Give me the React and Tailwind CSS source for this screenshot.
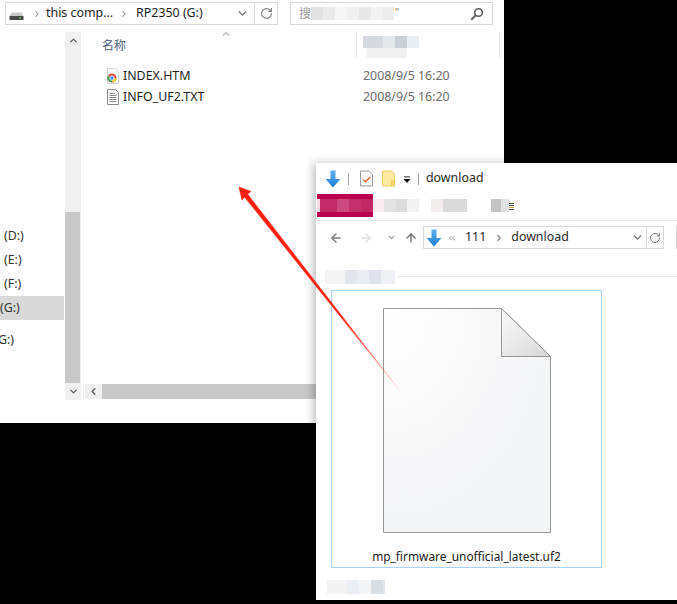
import { ArrowLeft, ArrowRight, ArrowUp, ChevronDown, ChevronUp, ChevronLeft, ChevronRight, ChevronsLeft, RotateCw } from 'lucide-react'

const uiFont = "font-['Noto_Sans','Noto_Sans_CJK_SC',sans-serif]"

// pixelated patches that hide text in the screenshot
function Mosaic({ cells, className = '' }) {
  return (
    <div className={`flex blur-[0.6px] ${className}`}>
      {cells.map((c, i) => (
        <div key={i} className={c} />
      ))}
    </div>
  )
}

function BlueArrow() {
  return (
    <svg width="16" height="18" viewBox="0 0 16 18" className="shrink-0">
      <defs>
        <linearGradient id="blue" x1="0" y1="0" x2="0" y2="1">
          <stop offset="0" stopColor="#5fb0ee" />
          <stop offset="1" stopColor="#1f7fd6" />
        </linearGradient>
      </defs>
      <path d="M5.5 0.5h5V9H15.5L8 17.5 0.5 9H5.5z" fill="url(#blue)" />
    </svg>
  )
}

function DriveIcon() {
  return (
    <svg width="15" height="8" viewBox="0 0 15 8">
      <path d="M2.5 0.5h10L14.5 4H0.5z" fill="#c9c9c9" />
      <rect x="0.5" y="4" width="14" height="4" fill="#4a4a4a" />
      <rect x="10" y="5.5" width="2" height="1" fill="#6fdc6f" />
    </svg>
  )
}

function ChromeDocIcon() {
  return (
    <svg width="16" height="16" viewBox="0 0 16 16" className="shrink-0">
      <path d="M2.5 0.5h8l3 3v12h-11z" fill="#fff" stroke="#d4d4d4" />
      <circle cx="7" cy="10" r="4.5" fill="#e8453c" />
      <path d="M7 10 L3 12.2 A4.5 4.5 0 0 1 3 7.8 L7 10z" fill="#3aa757" />
      <path d="M7 10 L3 12 A4.5 4.5 0 0 0 7 14.5 A4.5 4.5 0 0 0 11.5 10z" fill="#3aa757" />
      <path d="M7 10 L11.5 10 A4.5 4.5 0 0 1 7 14.5z" fill="#fbc02d" />
      <circle cx="7" cy="10" r="2.2" fill="#4a8af4" stroke="#fff" strokeWidth="0.8" />
    </svg>
  )
}

function TextDocIcon() {
  return (
    <svg width="16" height="16" viewBox="0 0 16 16" className="shrink-0">
      <path d="M2.5 0.5h8l3 3v12h-11z" fill="#fff" stroke="#8a8a8a" />
      <path d="M4.5 4.5h5M4.5 6.5h7M4.5 8.5h7M4.5 10.5h7M4.5 12.5h7" stroke="#8a8a8a" />
    </svg>
  )
}

function SearchIcon() {
  return (
    <svg width="14" height="14" viewBox="0 0 14 14" fill="none">
      <circle cx="8.5" cy="5.5" r="3.8" stroke="#5a5a5a" strokeWidth="1.6" />
      <path d="M5.7 8.3L1.2 12.8" stroke="#6a6a6a" strokeWidth="2.2" />
    </svg>
  )
}

function BigFileIcon() {
  return (
    <svg width="168" height="225" viewBox="0 0 168 225">
      <defs>
        <radialGradient id="sheet" cx="0.05" cy="0" r="1">
          <stop offset="0" stopColor="#ffffff" />
          <stop offset="0.5" stopColor="#f9f9fa" />
          <stop offset="1" stopColor="#f3f4f6" />
        </radialGradient>
        <linearGradient id="fold" x1="0" y1="0" x2="1" y2="1">
          <stop offset="0" stopColor="#fafafa" />
          <stop offset="1" stopColor="#d8d8d8" />
        </linearGradient>
      </defs>
      <path d="M0.5 0.5H118.5L167.5 48.5V224.5H0.5z" fill="url(#sheet)" stroke="#979797" />
      <path d="M118.5 0.5V48.5H167.5z" fill="url(#fold)" stroke="#979797" />
    </svg>
  )
}

function LeftWindow() {
  return (
    <div className={`absolute left-0 top-0 w-[504px] h-[423px] bg-white overflow-hidden text-[12.4px] ${uiFont}`}>
      <div className="flex h-[32px] pt-[2px]">
        <div className="ml-[5px] w-[273px] h-[23px] border border-[#d9d9d9] flex items-center text-[#1e1e1e]">
          <div className="ml-[3px] mt-[5px] flex"><DriveIcon /></div>
          <ChevronRight size={10} strokeWidth={2.5} className="ml-[8px] text-[#8a8a8a]" />
          <span className="ml-[4px]">this comp...</span>
          <ChevronRight size={10} strokeWidth={2.5} className="ml-[6px] text-[#8a8a8a]" />
          <span className="ml-[7px]">RP2350 (G:)</span>
          <ChevronDown size={13} strokeWidth={2.5} className="ml-auto mr-[5px] text-[#6a6a6a]" />
          <div className="w-[23px] h-full border-l border-[#d9d9d9] flex items-center justify-center">
            <RotateCw size={13} className="text-[#7a7a7a]" />
          </div>
        </div>
        <div className="ml-[12px] w-[203px] h-[23px] border border-[#d9d9d9] flex items-center">
          <span className="ml-[8px] text-[12px] text-[#9a9a9a] leading-none">搜</span>
          <Mosaic
            className="h-[13px]"
            cells={[
              'w-[12px] bg-[#e2e2e2]',
              'w-[12px] bg-[#eaeaea]',
              'w-[12px] bg-[#f6f6f6]',
              'w-[12px] bg-[#f0f0f0]',
              'w-[12px] bg-[#e8e8e8]',
              'w-[12px] bg-[#f1f1f1]',
              'w-[11px] bg-[#ececec]',
            ]}
          />
          <span className="ml-[1px] mb-[4px] text-[10px] text-[#777] leading-none">"</span>
          <div className="ml-auto mr-[8px] mt-[1px] flex"><SearchIcon /></div>
        </div>
      </div>

      <div className="flex h-[368px]">
        <div className="w-[65px] pt-[192px] text-[#333] shrink-0">
          <div className="h-[24px] pl-[4px] leading-[24px]">(D:)</div>
          <div className="h-[24px] pl-[4px] leading-[24px]">(E:)</div>
          <div className="h-[24px] pl-[4px] leading-[24px]">(F:)</div>
          <div className="h-[24px] w-[64px] bg-[#d9d9d9] leading-[24px]">(G:)</div>
          <div className="mt-[8px] h-[24px] -ml-[2px] leading-[24px]">G:)</div>
        </div>

        <div className="w-[16px] shrink-0 bg-[#f0f0f0] flex flex-col">
          <div className="h-[17px] flex items-center justify-center">
            <ChevronUp size={11} strokeWidth={3} className="text-[#606060]" />
          </div>
          <div className="h-[163px]" />
          <div className="h-[171px] w-[15px] bg-[#c8c8c8]" />
          <div className="h-[17px] flex items-center justify-center">
            <ChevronDown size={11} strokeWidth={3} className="text-[#606060]" />
          </div>
        </div>

        <div className="ml-[2px] flex-1 border-l border-[#f3f3f3] flex flex-col">
          <div className="flex h-[26px] shrink-0">
            <div className="w-[272px] pl-[18px] flex">
              <span className="mt-[4px] text-[12px] text-[#4c607a] leading-[20px]">名称</span>
              <ChevronUp size={12} className="ml-[94px] -mt-[4px] text-[#888]" />
            </div>
            <div className="w-[144px] border-l border-r border-[#e8e8e8] pl-[6px] pt-[4px]">
              <Mosaic
                className="h-[12px]"
                cells={['w-[20px] bg-[#d6d9e0]', 'w-[12px] bg-[#e4e7ea]', 'w-[12px] bg-[#c9ced7]', 'w-[12px] bg-[#e9eef3]']}
              />
              <Mosaic className="h-[10px] ml-[4px]" cells={['w-[40px] bg-[#f0f0f1]']} />
            </div>
          </div>
          <div className="pt-[8px]">
            <div className="flex h-[21px] items-center">
              <div className="w-[272px] pl-[21px] flex items-center gap-[2px] text-[#1e1e1e]">
                <ChromeDocIcon />
                <span>INDEX.HTM</span>
              </div>
              <span className="pl-[7px] text-[#6d6d6d]">2008/9/5 16:20</span>
            </div>
            <div className="flex h-[21px] items-center">
              <div className="w-[272px] pl-[21px] flex items-center gap-[2px] text-[#1e1e1e]">
                <TextDocIcon />
                <span>INFO_UF2.TXT</span>
              </div>
              <span className="pl-[7px] text-[#6d6d6d]">2008/9/5 16:20</span>
            </div>
          </div>
          <div className="mt-auto ml-[1px] h-[15px] mb-[1px] flex bg-[#f0f0f0]">
            <div className="w-[17px] flex items-center justify-center">
              <ChevronLeft size={11} strokeWidth={3} className="text-[#606060]" />
            </div>
            <div className="flex-1 bg-[#c8c8c8]" />
          </div>
        </div>
      </div>
    </div>
  )
}

function RightWindow() {
  return (
    <div className={`absolute left-[316px] top-[163px] w-[361px] h-[437px] bg-white overflow-hidden shadow-[-3px_0_8px_rgba(0,0,0,0.25)] text-[12px] ${uiFont}`}>
      <div className="h-[31px] flex items-center pl-[9px] text-[12.4px] text-[#2a2a2a]">
        <BlueArrow />
        <div className="ml-[7px] w-px h-[12px] bg-[#a0a0a0]" />
        <svg width="13" height="17" viewBox="0 0 14 17" className="ml-[11px]">
          <path d="M0.5 0.5h9l4 4v12h-13z" fill="#fff" stroke="#8c8c8c" />
          <path d="M3.5 9.5l2.5 2.5 5-5" fill="none" stroke="#e8632a" strokeWidth="1.5" />
        </svg>
        <svg width="13" height="17" viewBox="0 0 14 17" className="ml-[9px]">
          <path d="M0.5 0.5h10l3 3v13h-13z" fill="#fde9a0" stroke="#eec95a" />
          <rect x="10" y="11" width="3.5" height="5.5" fill="#f6d873" stroke="#eec95a" strokeWidth="0.8" />
        </svg>
        <svg width="8" height="8" viewBox="0 0 9 8" className="ml-[8px] mt-[2px]">
          <path d="M1 0.5h7" stroke="#111" />
          <path d="M0.5 3h8L4.5 7.5z" fill="#111" />
        </svg>
        <div className="ml-[7px] w-px h-[12px] bg-[#a0a0a0]" />
        <span className="ml-[7px]">download</span>
      </div>

      <div className="h-[23px] flex items-center">
        <div className="ml-[1px] w-[56px] h-[23px] bg-[#b8004f] flex items-center">
          <Mosaic
            className="h-[13px]"
            cells={['w-[3px] bg-[#f2d9e4]', 'w-[17px] bg-[#c22a68]', 'w-[12px] bg-[#cc4a7f]', 'w-[12px] bg-[#c4306c]', 'w-[12px] bg-[#c12864]']}
          />
        </div>
        <Mosaic
          className="h-[13px]"
          cells={['w-[11px] bg-[#f9ebf0]', 'w-[12px] bg-[#e3e3e3]', 'w-[11px] bg-[#dcdcdc]', 'w-[12px] bg-[#f3f3f3]']}
        />
        <Mosaic className="h-[13px] ml-[12px]" cells={['w-[12px] bg-[#f2eeee]', 'w-[24px] bg-[#dadada]']} />
        <Mosaic className="h-[13px] ml-[24px]" cells={['w-[10px] bg-[#c4c4c4]', 'w-[8px] bg-[#e2e2e2]']} />
        <div className="flex flex-col gap-[1px] mt-[2px]">
          <div className="w-[5px] h-px bg-[#444]" />
          <div className="w-[5px] h-px bg-[#444]" />
          <div className="w-[5px] h-px bg-[#e0a030]" />
          <div className="w-[5px] h-px bg-[#444]" />
        </div>
      </div>

      <div className="mt-[3px] h-px ml-[1px] bg-[#e4e4e4]" />

      <div className="mt-[5px] h-[23px] flex items-center">
        <ArrowLeft size={14} strokeWidth={2.5} className="ml-[13px] text-[#7c7c7c]" />
        <ArrowRight size={14} strokeWidth={2.5} className="ml-[16px] text-[#e0e0e0]" />
        <ChevronDown size={9} strokeWidth={3} className="ml-[14px] text-[#9a9a9a]" />
        <ArrowUp size={14} strokeWidth={2.5} className="ml-[8px] text-[#7c7c7c]" />
        <div className="ml-[5px] w-[241px] h-[23px] border border-[#d9d9d9] flex items-center text-[12.4px] text-[#2a2a2a]">
          <div className="ml-[2px] flex"><BlueArrow /></div>
          <ChevronsLeft size={10} strokeWidth={2} className="ml-[5px] text-[#8a8a8a]" />
          <span className="ml-[8px]">111</span>
          <ChevronRight size={10} strokeWidth={3} className="ml-[8px] text-[#8a8a8a]" />
          <span className="ml-[7px]">download</span>
          <ChevronDown size={13} strokeWidth={2.5} className="ml-auto mr-[2px] text-[#6a6a6a]" />
          <div className="w-[17px] h-full border-l border-[#d9d9d9] flex items-center justify-center">
            <RotateCw size={12} className="text-[#7a7a7a]" />
          </div>
        </div>
        <div className="ml-[12px] w-px h-[23px] bg-[#d9d9d9]" />
      </div>

      <div className="mt-[19px] flex items-center h-[17px]">
        <Mosaic
          className="ml-[9px] h-[14px]"
          cells={['w-[20px] bg-[#f4f4f5]', 'w-[12px] bg-[#e4e6ee]', 'w-[12px] bg-[#eaecf3]', 'w-[12px] bg-[#e0e3ed]', 'w-[14px] bg-[#eff0f4]']}
        />
        <div className="ml-[2px] flex-1 h-px bg-[#e4e4e4]" />
      </div>

      <div className="ml-[15px] mt-[5px] w-[271px] h-[278px] border border-[#a6d4fb] flex flex-col items-center">
        <div className="mt-[17px] flex"><BigFileIcon /></div>
        <span className="mt-[15px] text-[11.9px] leading-[17px] text-[#1a1a1a]">mp_firmware_unofficial_latest.uf2</span>
      </div>

      <Mosaic
        className="ml-[11px] mt-[12px] h-[14px]"
        cells={['w-[20px] bg-[#f3f3f4]', 'w-[12px] bg-[#ebeef2]', 'w-[12px] bg-[#f3f4f6]', 'w-[12px] bg-[#d9dde4]', 'w-[2px] bg-[#e4e7ee]']}
      />
    </div>
  )
}

function RedArrow() {
  return (
    <svg width="677" height="604" viewBox="0 0 677 604" className="absolute left-0 top-0 pointer-events-none">
      <defs>
        <linearGradient id="tail" gradientUnits="userSpaceOnUse" x1="340" y1="314" x2="400" y2="391">
          <stop offset="0" stopColor="#ff1f0f" />
          <stop offset="1" stopColor="#ff1f0f" stopOpacity="0.05" />
        </linearGradient>
      </defs>
      <path d="M239 187L251 191.5L247.5 194L400 391L244.5 197L242 200z" fill="url(#tail)" stroke="url(#tail)" strokeWidth="0.6" />
    </svg>
  )
}

export default function App() {
  return (
    <div className="relative w-[677px] h-[604px] bg-black overflow-hidden">
      <LeftWindow />
      <RightWindow />
      <RedArrow />
    </div>
  )
}
